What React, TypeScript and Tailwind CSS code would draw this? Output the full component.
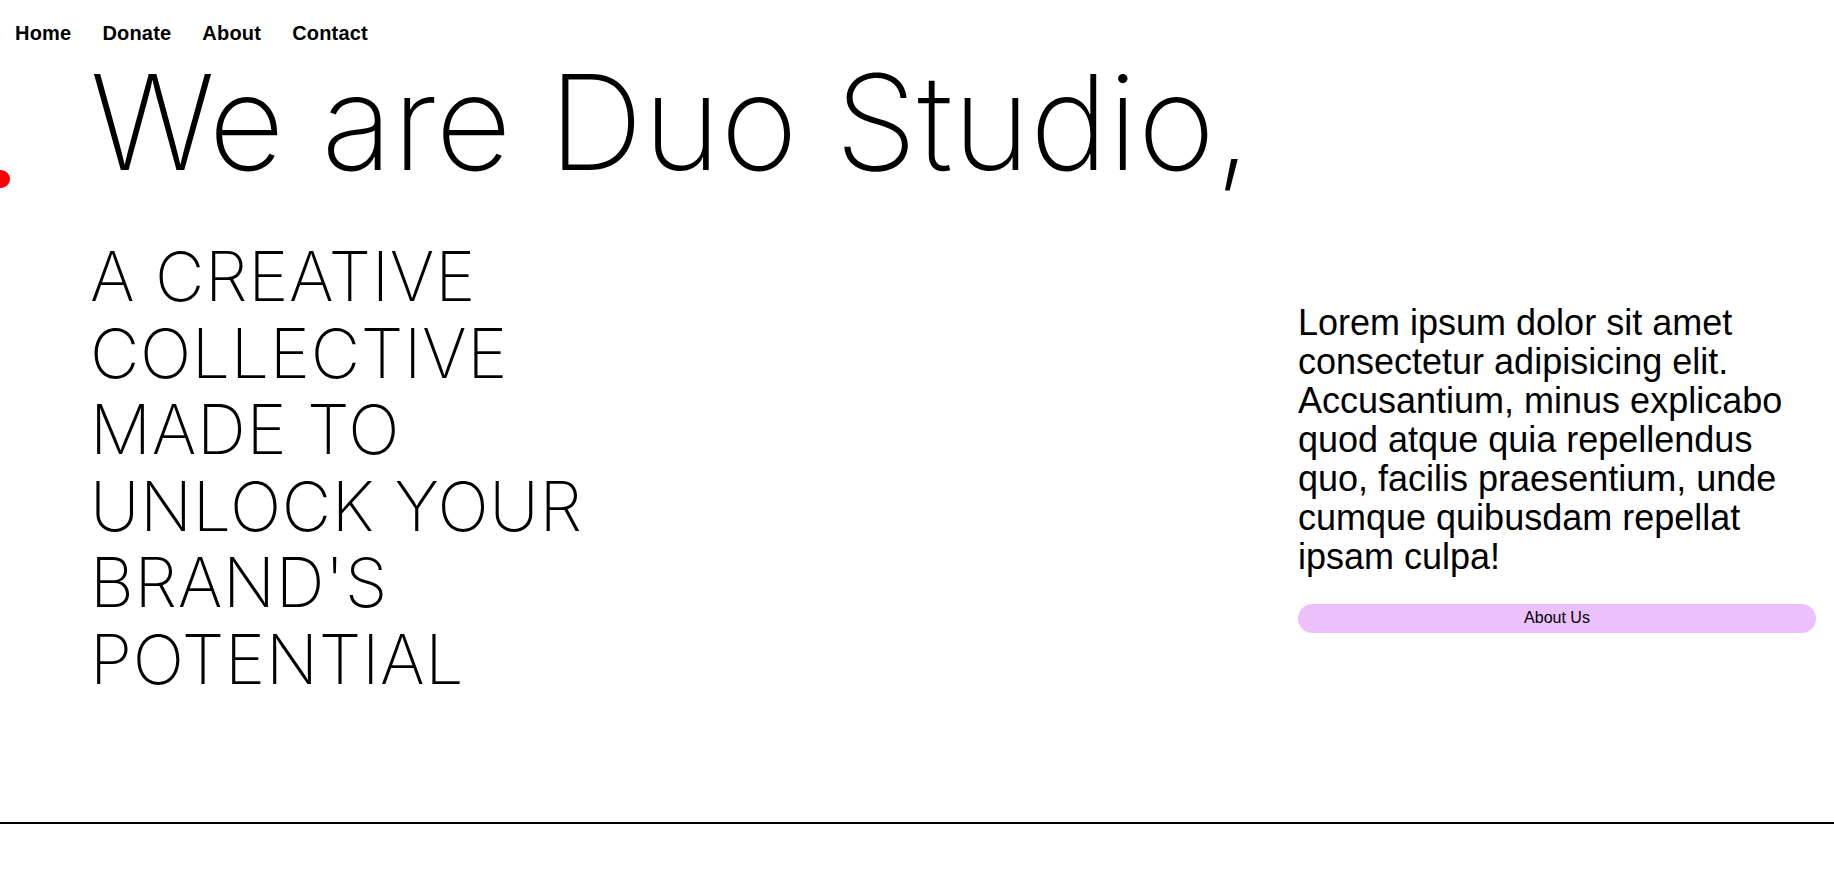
import { useState } from "react";

const links = ["Home", "Donate", "About", "Contact"];

export default function App() {
  const [active] = useState("Home");

  return (
    <div className="relative min-h-screen bg-white text-black font-['Liberation_Sans',Arial,sans-serif]">
      {/* cursor follower */}
      <div className="pointer-events-none absolute left-[-8px] top-[170px] h-[18px] w-[18px] rounded-full bg-[#ff0000]" />

      <nav className="flex gap-[31px] px-[15px] pt-[18px]">
        {links.map((l) => (
          <a
            key={l}
            href="#"
            className={`text-[20px] font-bold leading-[30px] tracking-[0.01em] ${active === l ? "text-black" : "text-black"}`}
          >
            {l}
          </a>
        ))}
      </nav>

      <section className="border-b-2 border-black pb-[125px]">
        <h1 className="mt-[8px] pl-[90px] font-['Inter',sans-serif] text-[132px] font-extralight leading-none">
          We are Duo Studio,
        </h1>

        <div className="mt-[50px] flex items-center justify-between pl-[90px] pr-[18px]">
          <h2 className="font-['Inter',sans-serif] text-[68px] font-extralight uppercase leading-[76.5px] tracking-[0.01em]">
            A creative
            <br />
            collective
            <br />
            made to
            <br />
            unlock your
            <br />
            brand's
            <br />
            potential
          </h2>

          <div className="w-[518px]">
            <p className="text-[36px] leading-[39px]">
              Lorem ipsum dolor sit amet consectetur adipisicing elit. Accusantium, minus explicabo quod atque quia
              repellendus quo, facilis praesentium, unde cumque quibusdam repellat ipsam culpa!
            </p>
            <button className="mt-[28px] flex h-[29px] w-full items-center justify-center rounded-full bg-[#ecc0fb] text-[16px]">
              About Us
            </button>
          </div>
        </div>
      </section>
    </div>
  );
}
